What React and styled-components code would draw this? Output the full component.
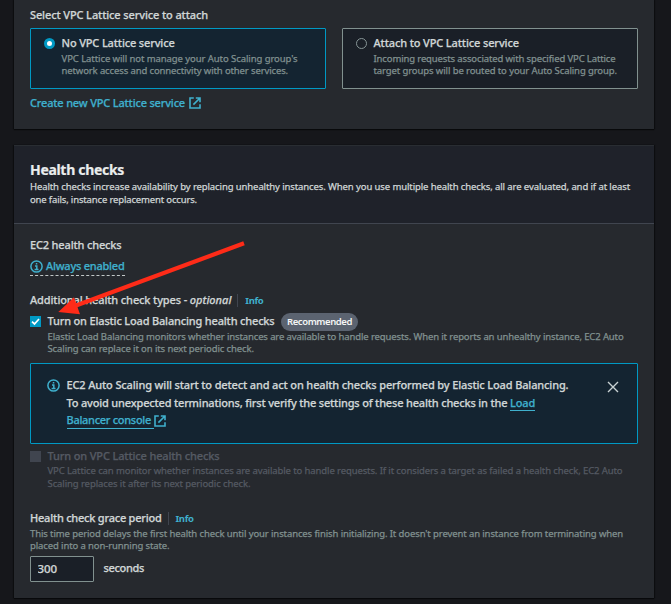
import React from 'react';
import styled, { createGlobalStyle, css } from 'styled-components';

const color = {
  page: '#16171b',
  panel: '#26292e',
  header: '#1f222a',
  field: '#1a1f27',
  selected: '#142431',
  accent: '#0099c4',
  link: '#3fb0cd',
  text: '#d0d6d6',
  heading: '#eaeded',
  muted: '#819190',
  disabled: '#555a63',
  divider: '#40454f',
};

const GlobalStyle = createGlobalStyle`
  * { box-sizing: border-box; }
  body {
    margin: 0;
    background: ${color.page};
    color: ${color.text};
    font-family: 'Noto Sans', sans-serif;
    overflow: hidden;
  }
`;

const Page = styled.main`
  position: relative;
  display: flex;
  flex-direction: column;
  gap: 16px;
  width: 671px;
  height: 604px;
  padding: 0 17px 0 14px;
  overflow: hidden;
`;

const Panel = styled.section`
  display: flex;
  flex-direction: column;
  height: ${(p) => p.$height}px;
  flex: none;
  background: ${color.panel};
  box-shadow: 0 1px 1px #08090b, -1px 0 1px #0e0f12, 1px 0 1px #0e0f12;
`;

const PanelBody = styled.div`
  display: flex;
  flex-direction: column;
  padding: ${(p) => p.$top}px 16px 0;
`;

const PanelHeader = styled.header`
  height: 79px;
  padding: 14px 16px 0;
  background: ${color.header};
  border-top: 1px solid #292d32;
  border-bottom: 1px solid ${color.divider};
`;

const Heading = styled.h2`
  margin: 0;
  color: ${color.heading};
  font-size: 14px;
  font-weight: 700;
  line-height: 20px;
  letter-spacing: -0.315px;
  -webkit-text-stroke: 0.2px currentColor;
`;

const Label = styled.div`
  color: ${(p) => (p.$disabled ? color.disabled : color.text)};
  font-size: 11px;
  font-weight: 500;
  line-height: ${(p) => p.$line || 18}px;
  letter-spacing: ${(p) => p.$track}px;
  white-space: pre;
  -webkit-text-stroke: 0.25px currentColor;
`;

const Note = styled.div`
  color: ${(p) => color[p.$tone || 'muted']};
  font-size: 9.5px;
  line-height: ${(p) => p.$line || 12}px;
  letter-spacing: ${(p) => p.$track}px;
  white-space: pre;
  -webkit-text-stroke: 0.25px currentColor;
`;

const Notes = styled.div`
  padding-top: 1px;
  margin-bottom: -1px;
`;

const LabelRow = styled.div`
  display: flex;
  height: 18px;
  margin-top: ${(p) => p.$gap || 0}px;
`;

const Optional = styled.em`
  letter-spacing: 0;
`;

const InfoLink = styled.a`
  align-self: center;
  height: 13px;
  margin-left: 6px;
  padding-left: 7px;
  border-left: 1px solid ${color.divider};
  color: ${color.link};
  font-size: 9.5px;
  font-weight: 700;
  line-height: 13px;
  letter-spacing: -0.37px;
`;

const Cards = styled.div`
  display: grid;
  grid-template-columns: 296px 296px;
  gap: 16px;
  margin-top: 4px;
`;

const Card = styled.label`
  display: flex;
  gap: 6.5px;
  height: 61px;
  padding: 5px 0 0 13px;
  border: 1px solid ${(p) => (p.$selected ? color.accent : '#81918f')};
  border-radius: 1px;
  background: ${(p) => (p.$selected ? color.selected : color.field)};
`;

const Radio = styled.span`
  flex: none;
  width: 11px;
  height: 11px;
  margin-top: 4px;
  border-radius: 50%;
  border: ${(p) => (p.$checked ? `3px solid ${color.accent}` : '1px solid #879596')};
  background: ${(p) => (p.$checked ? '#fff' : color.field)};
`;

const IconLink = styled.a`
  display: flex;
  gap: 3.5px;
  height: 18px;
  margin-top: 5px;
  color: ${color.link};
  ${Label} { color: inherit; }
`;

const StatusLink = styled.a`
  align-self: flex-start;
  display: flex;
  align-items: center;
  gap: 3px;
  width: 95px;
  height: 19px;
  margin-top: 3px;
  border-bottom: 1px dashed #c2c8c8;
  color: ${color.link};
  ${Label} { color: inherit; }
`;

const CheckRow = styled.div`
  display: flex;
  gap: 6.5px;
  margin-top: 3px;
`;

const Checkbox = styled.span`
  flex: none;
  display: flex;
  width: 11px;
  height: 11px;
  margin-top: 4px;
  background: ${(p) => (p.$checked ? color.accent : color.divider)};
`;

const Badge = styled.span`
  height: 18px;
  margin: 1px 0 -1px 6.5px;
  padding: 0 6px;
  width: 77px;
  border-radius: 9px;
  background: #5b6370;
  color: #f4f5f5;
  font-size: 9.5px;
  font-weight: 600;
  line-height: 17px;
  letter-spacing: -0.42px;
`;

const Alert = styled.div`
  display: flex;
  height: 81px;
  margin-top: 9px;
  padding: 12px 18px 0 16px;
  border: 1px solid ${color.accent};
  border-radius: 1px;
  background: ${color.selected};
`;

const AlertIcon = styled.span`
  display: flex;
  align-items: flex-start;
  width: 19.5px;
  padding-top: 3px;
  color: ${color.link};
`;

const AlertText = styled.div`
  flex: 1;
`;

const AlertLink = styled.a`
  display: inline-block;
  height: 17px;
  line-height: 18px;
  color: ${color.link};
  border-bottom: 1px solid ${color.link};
  ${(p) => p.$wrapped && css`
    width: 87.5px;
    height: 17px;
    line-height: 16px;
  `}
`;

const AlertLine = styled(Label)`
  display: flex;
  height: ${(p) => p.$line || 18}px;
`;

const CloseButton = styled.button`
  display: flex;
  align-self: flex-start;
  margin: 4.5px 0 0;
  padding: 0;
  border: 0;
  background: none;
  color: #c9d2d3;
`;

const FieldRow = styled.div`
  display: flex;
  align-items: flex-start;
  gap: 9.5px;
  margin-top: 5px;
  ${Label} { margin-top: 3px; }
`;

const Input = styled.input`
  width: 64px;
  height: 26px;
  padding: 0 6.5px 1px;
  border: 1px solid #81918f;
  border-radius: 1px;
  outline: 0;
  background: ${color.field};
  color: ${color.text};
  font: 500 11.5px 'Noto Sans', sans-serif;
  letter-spacing: -0.1px;
  -webkit-text-stroke: 0.25px currentColor;
`;

const Arrow = styled.svg`
  position: absolute;
  left: 0;
  top: 0;
  pointer-events: none;
`;

const IconBox = styled.svg`
  flex: none;
  fill: none;
  stroke: currentColor;
  margin-top: ${(p) => p.$top || 0}px;
`;

const ExternalBox = styled(IconBox)`
  color: ${color.link};
`;

const InfoIcon = () => (
  <IconBox width="13" height="13" viewBox="0 0 13 13" strokeWidth="1.5">
    <circle cx="6.5" cy="6.5" r="5.6" />
    <path d="M5 5.9h1.8v3.5M4.6 9.4h3.9M5.8 3.7h1.5" />
  </IconBox>
);

const ExternalIcon = ({ top }) => (
  <ExternalBox $top={top} width="12" height="12" viewBox="0 0 12 12" strokeWidth="1.6">
    <path d="M4.8 1H1v10h10V7.2M6.8 1H11v4.2M11 1 4.4 7.6" />
  </ExternalBox>
);

const Choice = ({ selected, title, titleTrack, lines }) => (
  <Card $selected={selected}>
    <Radio $checked={selected} />
    <div>
      <Label $track={titleTrack}>{title}</Label>
      <Notes>
        {lines.map(([text, track]) => (
          <Note key={text} $track={track}>{text}</Note>
        ))}
      </Notes>
    </div>
  </Card>
);

export default function App() {
  return (
    <Page>
      <GlobalStyle />
      <Panel $height={129}>
        <PanelBody $top={6}>
          <Label $track={-0.12}>Select VPC Lattice service to attach</Label>
          <Cards>
            <Choice
              selected
              title="No VPC Lattice service"
              titleTrack={-0.15}
              lines={[
                ["VPC Lattice will not manage your Auto Scaling group's", -0.072],
                ['network access and connectivity with other services.', -0.119],
              ]}
            />
            <Choice
              title="Attach to VPC Lattice service"
              titleTrack={-0.13}
              lines={[
                ['Incoming requests associated with specified VPC Lattice', -0.127],
                ['target groups will be routed to your Auto Scaling group.', -0.099],
              ]}
            />
          </Cards>
          <IconLink>
            <Label $track={-0.18}>Create new VPC Lattice service</Label>
            <ExternalIcon top={3} />
          </IconLink>
        </PanelBody>
      </Panel>

      <Panel $height={453}>
        <PanelHeader>
          <Heading>Health checks</Heading>
          <Note $tone="text" $line={13} $track={-0.098}>
            Health checks increase availability by replacing unhealthy instances. When you use multiple health checks, all are evaluated, and if at least
          </Note>
          <Note $tone="text" $line={13} $track={-0.149}>one fails, instance replacement occurs.</Note>
        </PanelHeader>
        <PanelBody $top={12}>
          <Label $track={-0.16}>EC2 health checks</Label>
          <StatusLink>
            <InfoIcon />
            <Label $track={-0.235}>Always enabled</Label>
          </StatusLink>

          <LabelRow $gap={15}>
            <Label $track={-0.13}>
              {'Additional health check types - '}
              <Optional>optional</Optional>
            </Label>
            <InfoLink>Info</InfoLink>
          </LabelRow>

          <CheckRow>
            <Checkbox $checked>
              <IconBox width="11" height="11" viewBox="0 0 11 11" strokeWidth="1.7" color="#fff">
                <path d="M2 5.7 4.5 8 9 3" />
              </IconBox>
            </Checkbox>
            <div>
              <LabelRow>
                <Label $track={-0.175}>Turn on Elastic Load Balancing health checks</Label>
                <Badge>Recommended</Badge>
              </LabelRow>
              <Notes>
                <Note $track={-0.117}>
                  Elastic Load Balancing monitors whether instances are available to handle requests. When it reports an unhealthy instance, EC2 Auto
                </Note>
                <Note $track={-0.099}>Scaling can replace it on its next periodic check.</Note>
              </Notes>
            </div>
          </CheckRow>

          <Alert>
            <AlertIcon><InfoIcon /></AlertIcon>
            <AlertText>
              <AlertLine $track={-0.139}>
                EC2 Auto Scaling will start to detect and act on health checks performed by Elastic Load Balancing.
              </AlertLine>
              <AlertLine $track={-0.179}>
                {'To avoid unexpected terminations, first verify the settings of these health checks in the '}
                <AlertLink>Load</AlertLink>
              </AlertLine>
              <AlertLine $track={-0.295} $line={17}>
                <AlertLink $wrapped>Balancer console</AlertLink>
                <ExternalIcon top={3} />
              </AlertLine>
            </AlertText>
            <CloseButton aria-label="Close">
              <IconBox width="12" height="12" viewBox="0 0 12 12" strokeWidth="1.4">
                <path d="m1 1 10 10M11 1 1 11" />
              </IconBox>
            </CloseButton>
          </Alert>

          <CheckRow>
            <Checkbox />
            <div>
              <Label $disabled $line={17} $track={-0.148}>Turn on VPC Lattice health checks</Label>
              <Note $tone="disabled" $line={13} $track={-0.105}>
                VPC Lattice can monitor whether instances are available to handle requests. If it considers a target as failed a health check, EC2 Auto
              </Note>
              <Note $tone="disabled" $line={13} $track={-0.089}>Scaling replaces it after its next periodic check.</Note>
            </div>
          </CheckRow>

          <LabelRow $gap={19}>
            <Label $track={-0.227}>Health check grace period</Label>
            <InfoLink>Info</InfoLink>
          </LabelRow>
          <Notes>
            <Note $track={-0.103}>
              This time period delays the first health check until your instances finish initializing. It doesn't prevent an instance from terminating when
            </Note>
            <Note $track={-0.109}>placed into a non-running state.</Note>
          </Notes>
          <FieldRow>
            <Input defaultValue="300" />
            <Label $track={-0.34}>seconds</Label>
          </FieldRow>
        </PanelBody>
      </Panel>

      <Arrow width="671" height="604" viewBox="0 0 671 604" aria-hidden="true">
        <path d="M244 243.3 72 307" stroke="#fe2b18" strokeWidth="4.2" fill="none" />
        <path d="M58.3 312 74 297.3 80 314.2Z" fill="#fe2b18" />
      </Arrow>
    </Page>
  );
}
